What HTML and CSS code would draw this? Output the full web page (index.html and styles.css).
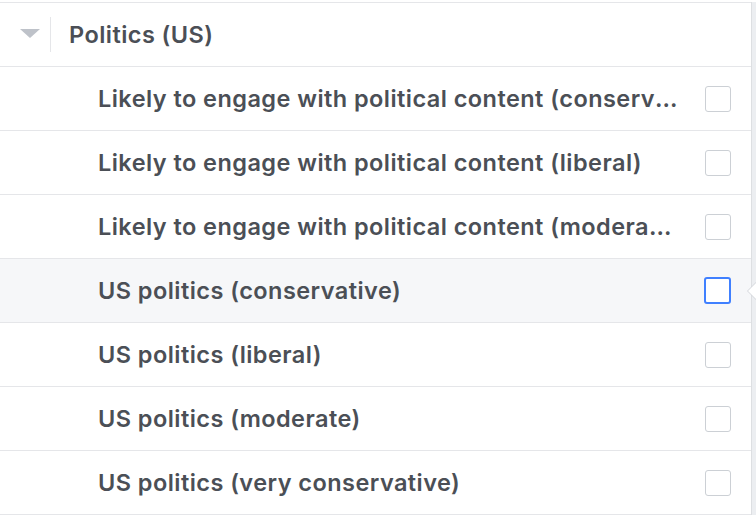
FILE: index.html
```html
<!DOCTYPE html>
<html lang="en">
<head>
  <meta charset="UTF-8" />
  <meta name="viewport" content="width=device-width, initial-scale=1.0"/>
  <title>Politics (US)</title>
  <link rel="stylesheet" href="styles.css">
</head>
<body>

  <div class="panel">
    <div class="list">
      <!-- group header -->
      <div class="group-head">
        <span class="caret"></span>
        <span class="divider"></span>
        <span class="group-title">Politics (US)</span>
      </div>

      <ul class="options">
        <li class="option">
          <span class="option-label">Likely to engage with political content (conservative)</span>
          <span class="check"></span>
        </li>
        <li class="option">
          <span class="option-label">Likely to engage with political content (liberal)</span>
          <span class="check"></span>
        </li>
        <li class="option">
          <span class="option-label">Likely to engage with political content (moderate)</span>
          <span class="check"></span>
        </li>
        <li class="option is-hover">
          <span class="option-label">US politics (conservative)</span>
          <span class="check"></span>
          <span class="pointer"></span>
        </li>
        <li class="option">
          <span class="option-label">US politics (liberal)</span>
          <span class="check"></span>
        </li>
        <li class="option">
          <span class="option-label">US politics (moderate)</span>
          <span class="check"></span>
        </li>
        <li class="option">
          <span class="option-label">US politics (very conservative)</span>
          <span class="check"></span>
        </li>
      </ul>
    </div>
    <div class="edge"></div>
  </div>

</body>
</html>
```

FILE: styles.css
```css
body {
  font-family: Inter, "Liberation Sans", sans-serif;
  background-color: #fff;
  color: #4b4f56;
  margin: 0;
  padding: 0;
}

.panel {
  display: flex;
  width: 756px;
  padding-top: 2px;
}

.list {
  width: 751px;
  border-right: 1px solid #dddfe2;
}

.edge {
  width: 4px;
  background-color: #eceef1;
}

/* group header */
.group-head {
  display: flex;
  align-items: center;
  height: 63px;
  border-top: 1px solid #e5e6e9;
  border-bottom: 1px solid #e5e6e9;
  padding-left: 20px;
}

.caret {
  width: 0;
  height: 0;
  border-left: 10px solid transparent;
  border-right: 10px solid transparent;
  border-top: 9px solid #bec2c9;
  margin-top: -3px;
}

.divider {
  width: 1px;
  height: 35px;
  background-color: #e5e6e9;
  margin-left: 10px;
  margin-right: 18px;
}

.group-title {
  font-size: 23.5px;
  font-weight: 600;
  letter-spacing: 0.45px;
}

/* options */
.options {
  list-style: none;
  margin: 0;
  padding: 0;
}

.option {
  position: relative;
  display: flex;
  align-items: center;
  height: 63px;
  border-bottom: 1px solid #e5e6e9;
  padding-left: 98px;
  padding-right: 20px;
}

.option.is-hover {
  background-color: #f6f7f9;
}

.option-label {
  flex: 1;
  min-width: 0;
  font-size: 23.5px;
  font-weight: 600;
  letter-spacing: 0.45px;
  white-space: nowrap;
  overflow: hidden;
  text-overflow: ellipsis;
  margin-right: 25px;
}

.check {
  width: 24px;
  height: 24px;
  border: 1.5px solid #ccd0d5;
  border-radius: 3px;
  background-color: #fff;
}

.is-hover .check {
  border: 2px solid #4080ff;
  width: 23px;
  height: 23px;
}

/* tooltip arrow on the hovered row */
.pointer {
  position: absolute;
  right: -5px;
  top: 50%;
  margin-top: -9px;
  width: 0;
  height: 0;
  border-top: 9px solid transparent;
  border-bottom: 9px solid transparent;
  border-right: 9px solid #d3d6db;
}

.pointer::after {
  content: "";
  position: absolute;
  top: -8px;
  left: 1px;
  border-top: 8px solid transparent;
  border-bottom: 8px solid transparent;
  border-right: 8px solid #fff;
}
```
